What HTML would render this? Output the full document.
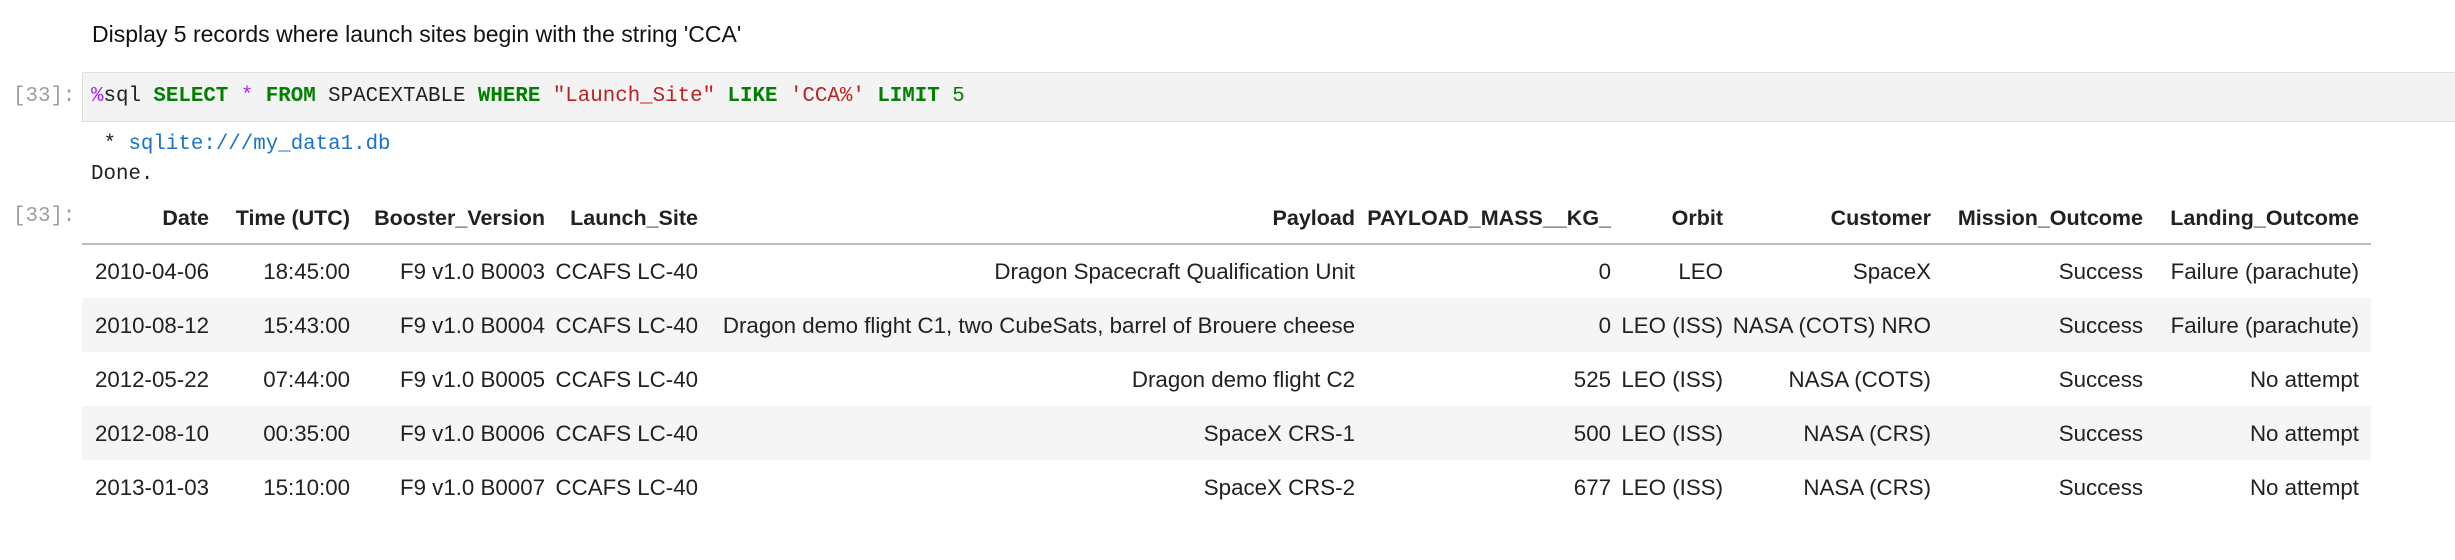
<!DOCTYPE html>
<html><head><meta charset="utf-8"><style>
body{margin:0;width:2455px;height:560px;background:#fff;position:relative;overflow:hidden;font-family:"Liberation Sans",sans-serif;color:#212121}
.a{position:absolute;white-space:nowrap}
.m{font-family:"Liberation Mono",monospace}
.p{color:#9e9e9e;font-size:20.8px;line-height:24px}
.c{font-size:20.8px;line-height:24px}
.t{font-size:22.3px;line-height:26px}
.r{text-align:right}
.h{font-weight:bold;font-size:21.5px}
.k{color:#008000;font-weight:bold}
.s{color:#ba2121}
.o{color:#aa22ff}
</style></head><body>
<div class="a" style="left:92px;top:20px;font-size:23px;line-height:28px;color:#111">Display 5 records where launch sites begin with the string 'CCA'</div>
<div class="a" style="left:82px;top:72px;width:2373px;height:48px;background:#f3f3f3;border:1px solid #dfdfdf;border-right:none"></div>
<div class="a m p" style="left:13px;top:85px">[33]:</div>
<div class="a m c" style="left:91px;top:85px"><span class="o">%</span>sql <span class="k">SELECT</span> <span class="o">*</span> <span class="k">FROM</span> SPACEXTABLE <span class="k">WHERE</span> <span class="s">"Launch_Site"</span> <span class="k">LIKE</span> <span class="s">'CCA%'</span> <span class="k">LIMIT</span> <span style="color:#008000">5</span></div>
<div class="a m c" style="left:91px;top:133px">&nbsp;* <span style="color:#1a73c8">sqlite:///my_data1.db</span></div>
<div class="a m c" style="left:91px;top:163px">Done.</div>
<div class="a m p" style="left:13px;top:205px">[33]:</div>
<div class="a" style="left:82px;top:243px;width:2289px;height:2px;background:#bdbdbd"></div>
<div class="a" style="left:82px;top:298px;width:2289px;height:54px;background:#f5f5f5"></div>
<div class="a" style="left:82px;top:406px;width:2289px;height:54px;background:#f5f5f5"></div>
<div id="tb"></div>
<script>
var R=[209,350,545,698,1355,1611,1723,1931,2143,2359];
var H=["Date","Time (UTC)","Booster_Version","Launch_Site","Payload","PAYLOAD_MASS__KG_","Orbit","Customer","Mission_Outcome","Landing_Outcome"];
var D=[
["2010-04-06","18:45:00","F9 v1.0  B0003","CCAFS LC-40","Dragon Spacecraft Qualification Unit","0","LEO","SpaceX","Success","Failure (parachute)"],
["2010-08-12","15:43:00","F9 v1.0  B0004","CCAFS LC-40","Dragon demo flight C1, two CubeSats, barrel of Brouere cheese","0","LEO (ISS)","NASA (COTS) NRO","Success","Failure (parachute)"],
["2012-05-22","07:44:00","F9 v1.0  B0005","CCAFS LC-40","Dragon demo flight C2","525","LEO (ISS)","NASA (COTS)","Success","No attempt"],
["2012-08-10","00:35:00","F9 v1.0  B0006","CCAFS LC-40","SpaceX CRS-1","500","LEO (ISS)","NASA (CRS)","Success","No attempt"],
["2013-01-03","15:10:00","F9 v1.0  B0007","CCAFS LC-40","SpaceX CRS-2","677","LEO (ISS)","NASA (CRS)","Success","No attempt"]];
var s="";
function cell(txt,x,y,b){s+='<div class="a t r'+(b?' h':'')+'" style="right:'+(2455-x)+'px;top:'+(y-13)+'px">'+txt.replace(/  /g,' ')+'</div>';}
H.forEach(function(h,i){cell(h,R[i],218,1);});
var Y=[272,326,380,434,488];
D.forEach(function(r,j){r.forEach(function(c,i){cell(c,R[i],Y[j],0);});});
document.getElementById("tb").innerHTML=s;
</script>
</body></html>
